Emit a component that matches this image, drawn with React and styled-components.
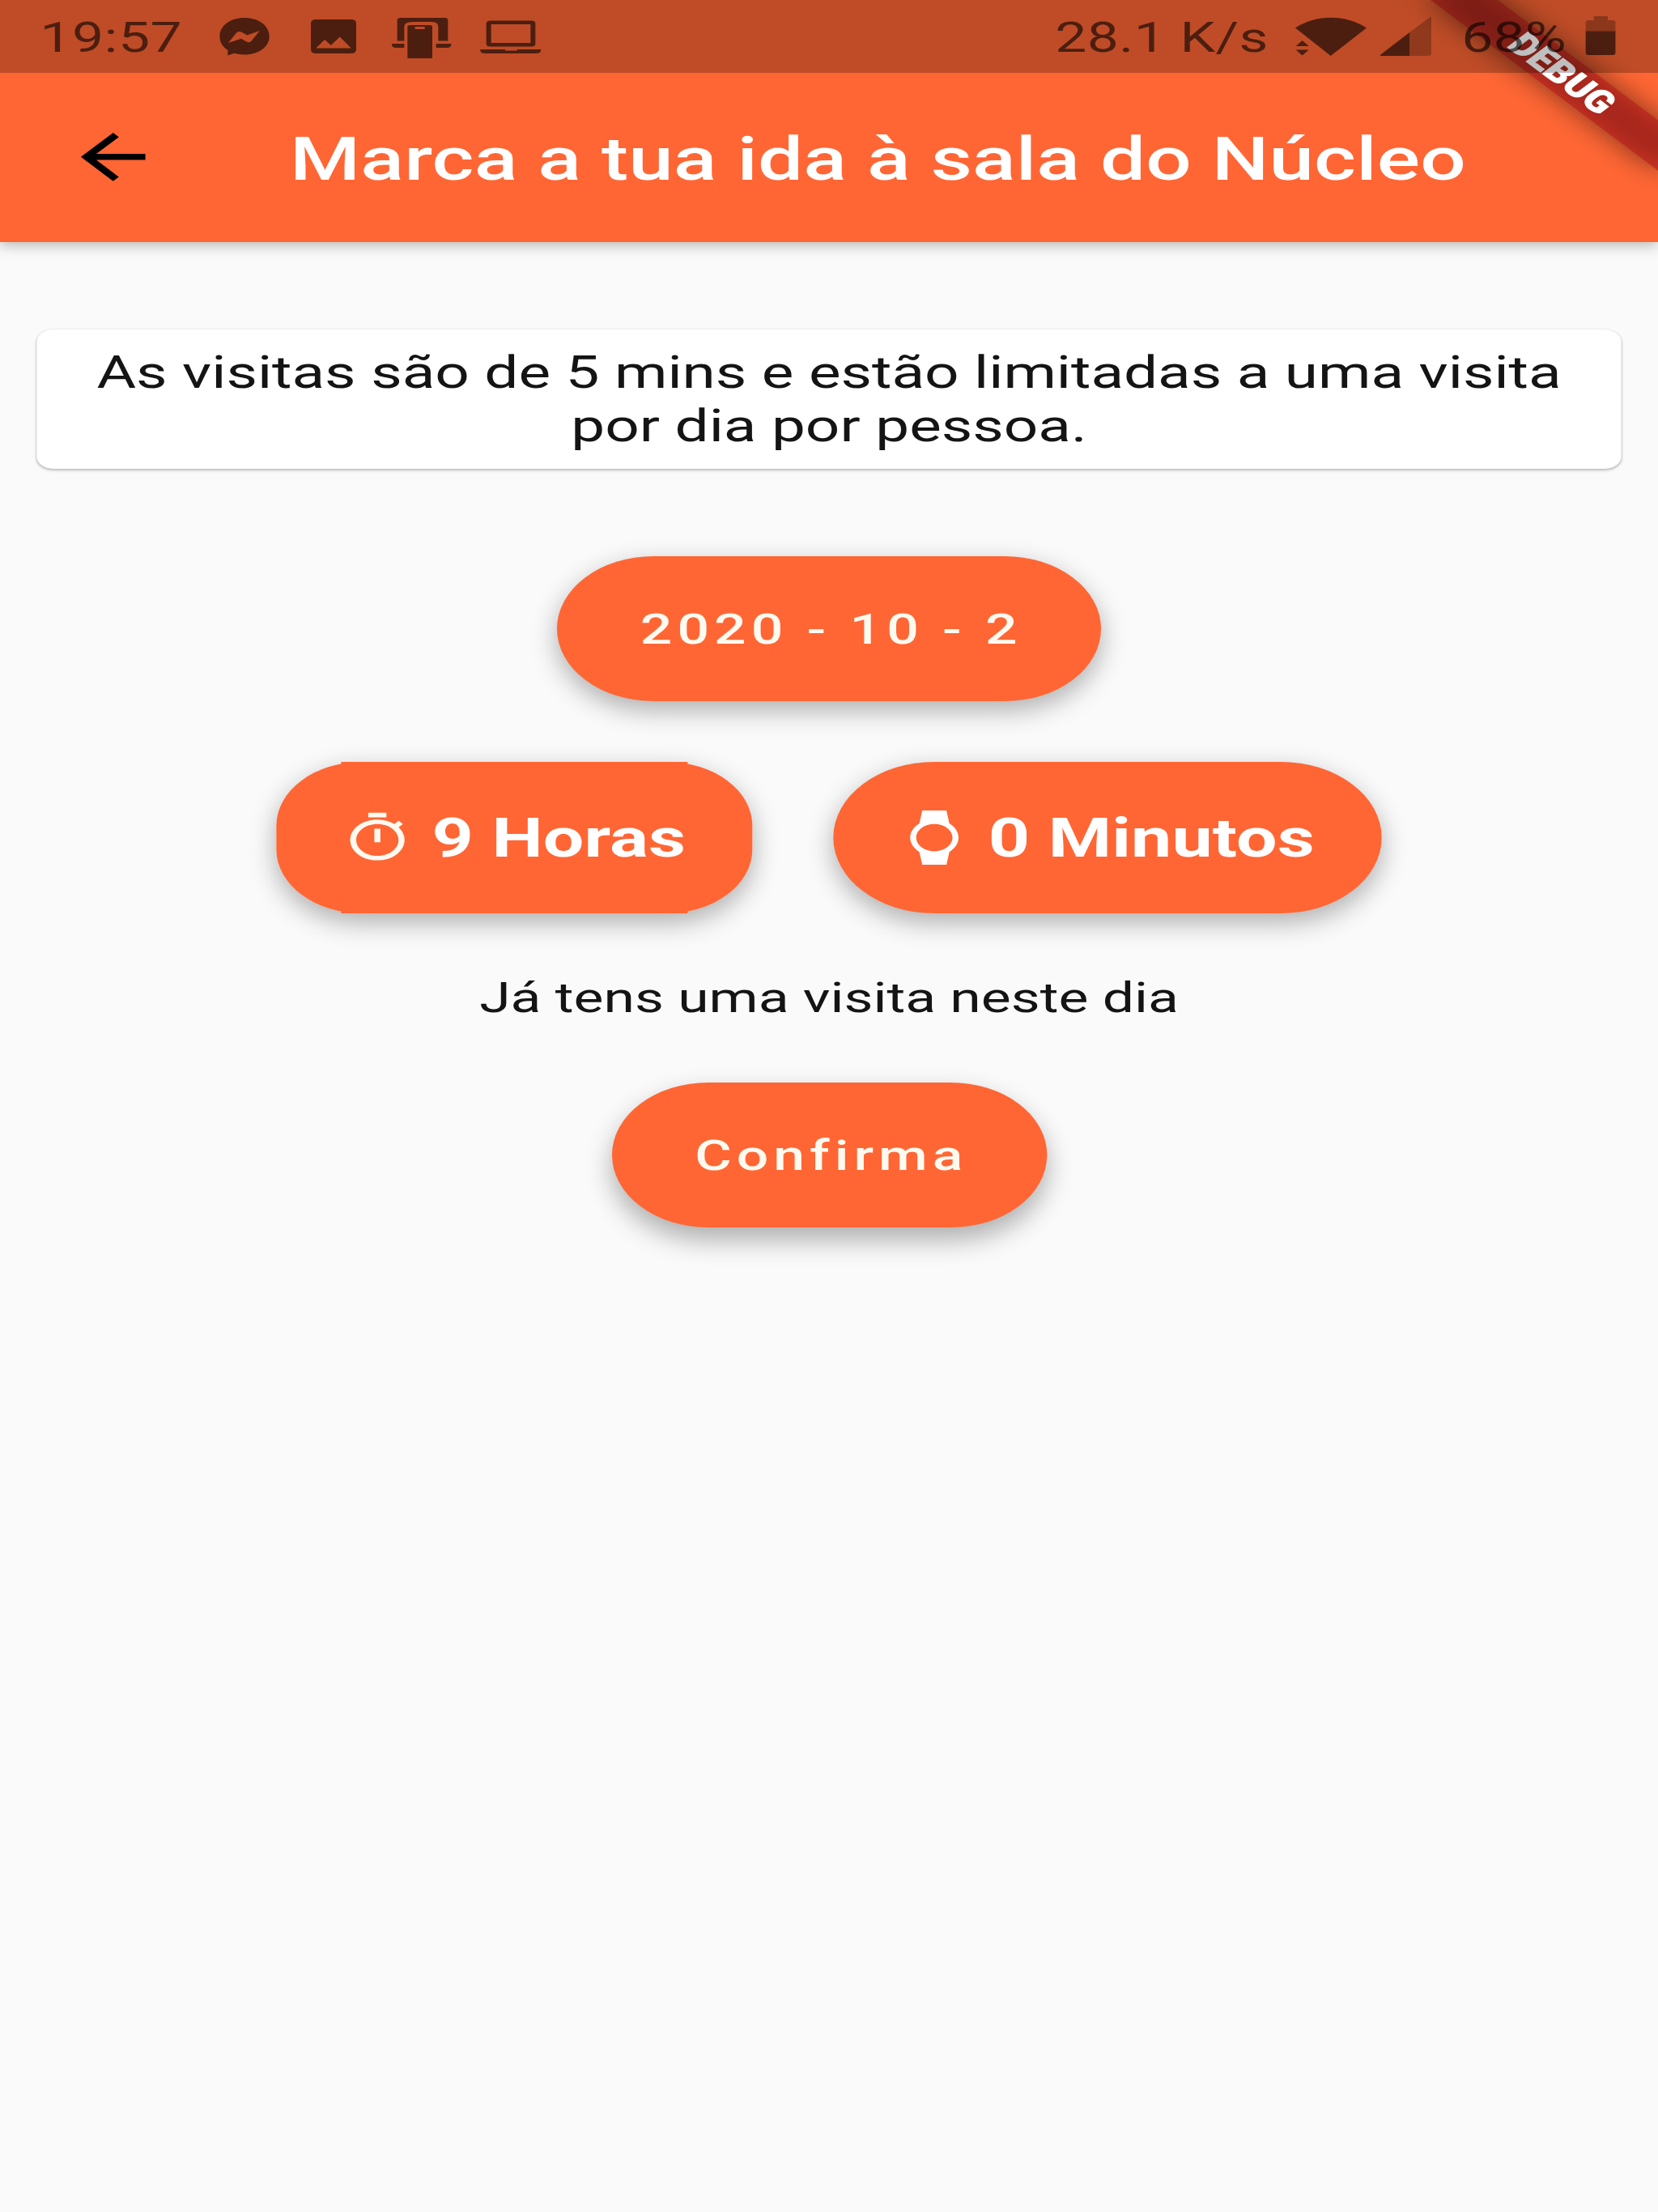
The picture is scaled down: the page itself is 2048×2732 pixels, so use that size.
import React from "react";
import styled, { createGlobalStyle } from "styled-components";

const ORANGE = "#ff6634";
const INK = "rgba(0, 0, 0, 0.6)";

const GlobalStyle = createGlobalStyle`
  html, body {
    margin: 0;
    padding: 0;
    background: #fafafa;
    overflow: hidden;
  }
  * { box-sizing: border-box; }
`;

/* The phone canvas is 9:16 and is shown stretched to a 3:4 display. */
const Screen = styled.div`
  position: relative;
  width: 1536px;
  height: 2732px;
  overflow: hidden;
  display: flex;
  flex-direction: column;
  background: #fafafa;
  color: rgba(0, 0, 0, 0.92);
  font-family: Roboto, "Liberation Sans", sans-serif;
  transform: scaleX(1.33333);
  transform-origin: 0 0;
`;

const AppBar = styled.header`
  flex: none;
  height: 298.6px;
  padding: 89.6px 60px 0;
  display: flex;
  align-items: center;
  background: ${ORANGE};
  box-shadow: 0 4px 14px rgba(0, 0, 0, 0.27);
`;

const BackIcon = styled.svg`
  flex: none;
  width: 89.6px;
  height: 89.6px;
  margin-right: 119px;
`;

const Title = styled.h1`
  margin: 0;
  padding-top: 6px;
  color: #fff;
  font-size: 74.67px;
  font-weight: 500;
  letter-spacing: 0.11px;
  line-height: 88px;
  white-space: nowrap;
`;

const Body = styled.main`
  display: flex;
  flex-direction: column;
  align-items: center;
  padding: 108px 33.6px 0;
`;

const Card = styled.section`
  width: 100%;
  height: 172.8px;
  padding: 20.4px 40px 0;
  border-radius: 15px;
  background: #fff;
  box-shadow: 0 2px 3px rgba(0, 0, 0, 0.24), 0 0 2px rgba(0, 0, 0, 0.1);
  font-size: 56px;
  line-height: 66px;
  letter-spacing: -0.01px;
  text-align: center;
`;

const Button = styled.button`
  position: relative;
  flex: none;
  display: flex;
  align-items: center;
  justify-content: center;
  width: ${(p) => p.$width}px;
  height: ${(p) => p.$height || 179.2}px;
  margin: ${(p) => p.$top || 0}px 0 0;
  padding: 2px 0 0 4.2px;
  border: 0;
  border-radius: ${(p) => p.$radius || 94}px;
  background: ${ORANGE};
  color: #fffaf0;
  font-family: inherit;
  font-size: 52.27px;
  font-weight: 500;
  letter-spacing: 4.5px;
  box-shadow: 0 ${(p) => p.$drop || 11}px 28px rgba(0, 0, 0, 0.31);
`;

const PickerRow = styled.div`
  display: flex;
  gap: 75px;
  margin-top: 75px;
`;

const PickerButton = styled(Button)`
  justify-content: flex-start;
  gap: 16.5px;
  padding: 0 0 0 60px;
  color: #fff;
  font-size: 67.2px;
  font-weight: 700;
  letter-spacing: 0.1px;
  white-space: nowrap;
`;

const SquaredPickerButton = styled(PickerButton)`
  background: transparent;
  &::before {
    content: "";
    position: absolute;
    inset: 0;
    border-radius: 79px;
    background: ${ORANGE};
  }
  &::after {
    content: "";
    position: absolute;
    inset: 0 59.5px;
    background: ${ORANGE};
  }
  & > * {
    position: relative;
    z-index: 1;
  }
`;

const PickerIcon = styled.svg`
  flex: none;
  width: 67.2px;
  height: 67.2px;
`;

const PickerLabel = styled.span`
  padding-top: 2px;
`;

const Message = styled.p`
  margin: 74.5px 0 0;
  height: 59.5px;
  font-size: 52.27px;
  line-height: 61px;
  letter-spacing: -0.01px;
`;

const BannerAnchor = styled.div`
  position: absolute;
  top: 0;
  right: 0;
  width: 0;
  height: 0;
  transform: rotate(45deg);
`;

const BannerShadow = styled.div`
  position: absolute;
  left: -149.3px;
  top: 104.5px;
  width: 298.7px;
  height: 44.8px;
  background: rgba(0, 0, 0, 0.5);
  filter: blur(14.8px);
`;

const Banner = styled.div`
  position: absolute;
  left: -149.3px;
  top: 104.5px;
  width: 298.7px;
  height: 44.8px;
  padding-left: 3px;
  background: rgba(183, 28, 28, 0.63);
  color: #fff;
  font-size: 38.1px;
  font-weight: 900;
  line-height: 45.6px;
  text-align: center;
  -webkit-text-stroke: 0.8px #fff;
`;

const StatusBar = styled.div`
  position: absolute;
  inset: 0 0 auto 0;
  height: 89.6px;
  display: flex;
  align-items: center;
  padding: 0 39.4px 0 37px;
  background: rgba(0, 0, 0, 0.25);
  color: ${INK};
  font-size: 52.27px;
  line-height: 92px;
  white-space: nowrap;
`;

const StatusText = styled.span`
  flex: none;
  width: ${(p) => p.$width}px;
  margin-left: ${(p) => p.$left || 0}px;
  padding-top: 5px;
  letter-spacing: ${(p) => p.$spacing || 0}px;
`;

const StatusIcon = styled.svg`
  flex: none;
  width: ${(p) => p.$width}px;
  height: 52px;
  margin-left: ${(p) => p.$left}px;
  fill: ${INK};
  overflow: visible;
`;

const Spacer = styled.div`
  flex: 1;
`;

export default function App() {
  return (
    <>
      <GlobalStyle />
      <Screen>
        <AppBar>
          <BackIcon viewBox="0 0 24 24">
            <path d="M20 11H7.83l5.59-5.59L12 4l-8 8 8 8 1.41-1.41L7.83 13H20v-2z" />
          </BackIcon>
          <Title>Marca a tua ida à sala do Núcleo</Title>
        </AppBar>

        <Body>
          <Card>
            As visitas são de 5 mins e estão limitadas a uma visita por dia por pessoa.
          </Card>
          <Button $width={503.7} $top={107.5}>2020 - 10 - 2</Button>
          <PickerRow>
            <SquaredPickerButton $width={440.5} $height={186.8} $radius={79}>
              <PickerIcon viewBox="0 0 24 24" fill="#fffaf0">
                <path d="M15 1H9v2h6V1zm-4 13h2V8h-2v6zm8.03-6.61l1.42-1.42c-.43-.51-.9-.99-1.41-1.41l-1.42 1.42C16.07 4.74 14.12 4 12 4c-4.97 0-9 4.03-9 9s4.02 9 9 9 9-4.03 9-9c0-2.12-.74-4.07-1.97-5.61zM12 20c-3.87 0-7-3.13-7-7s3.13-7 7-7 7 3.13 7 7-3.13 7-7 7z" />
              </PickerIcon>
              <PickerLabel>9 Horas</PickerLabel>
            </SquaredPickerButton>
            <PickerButton $width={507.7} $height={186.8}>
              <PickerIcon viewBox="0 0 24 24" fill="#fff">
                <path d="M20 12c0-2.54-1.19-4.81-3.04-6.27L16 0H8l-.95 5.73C5.19 7.19 4 9.45 4 12s1.19 4.81 3.05 6.27L8 24h8l.96-5.73C18.81 16.81 20 14.54 20 12zM6 12c0-3.31 2.69-6 6-6s6 2.69 6 6-2.69 6-6 6-6-2.69-6-6z" />
              </PickerIcon>
              <PickerLabel>0 Minutos</PickerLabel>
            </PickerButton>
          </PickerRow>
          <Message>Já tens uma visita neste dia</Message>
          <Button $width={403} $top={75} $drop={15}>Confirma</Button>
        </Body>

        <BannerAnchor>
          <BannerShadow />
          <Banner>DEBUG</Banner>
        </BannerAnchor>

        <StatusBar>
          <StatusText $width={134} $spacing={0.35}>19:57</StatusText>
          <StatusIcon $left={32} $width={47} viewBox="0 0 47 52">
            <path
              fillRule="evenodd"
              d="M23.5 3C10.500 3 0.500 12.500 0.500 26C0.500 33 3 38.500 8 43V49.500L14 46.800C17 48 20 48.500 23.500 48.500C36.500 48.500 46.500 39 46.500 26C46.500 12.500 36.500 3 23.500 3ZM8.500 34L16 21.500C17.500 19.500 19.300 19.500 21 20.700L26 24.400L37.500 19L30 31.500C28.700 33.500 27 33.600 25.300 32.400L20.500 28.800Z"
            />
          </StatusIcon>
          <StatusIcon $left={38} $width={42} viewBox="0 0 42 52">
            <path
              fillRule="evenodd"
              d="M4.700 5H37.300Q42 5 42 9.700V42.300Q42 47 37.300 47H4.700Q0 47 0 42.300V9.700Q0 5 4.700 5ZM4.700 40.500H37.300L26.800 26.500L18.600 37L12.800 30Z"
            />
          </StatusIcon>
          <StatusIcon $left={33} $width={55} viewBox="0 0 55 52">
            <path d="M5 31.500V6Q5 3 8 3H49Q52 3 52 6V31.500H43V14Q43 8 37 8H20Q11.500 8 11.500 14V31.500ZM0 35H11.500V40H4Q0 40 0 36ZM41 35H55V36Q55 40 51 40H41Z" />
            <path fillRule="evenodd" d="M17 12H35Q37.500 12 37.500 14V53H14.500V14Q14.500 12 17 12ZM21.500 14V17H30.500V14Z" />
          </StatusIcon>
          <StatusIcon $left={27} $width={56} viewBox="0 0 56 52">
            <path
              fillRule="evenodd"
              d="M9.500 6.500H47.500Q51 6.500 51 10V35Q51 38.500 47.500 38.500H9.500Q5.500 38.500 5.500 35V10Q5.500 6.500 9.500 6.500ZM10 11V34H46.500V11ZM0 42H23V43.500H34V42H56V43.500Q56 47 51 47H5Q0 47 0 43.500Z"
            />
          </StatusIcon>
          <Spacer />
          <StatusText $width={198} $spacing={0.15}>28.1 K/s</StatusText>
          <StatusIcon $left={24.5} $width={66} viewBox="0 0 66 52">
            <path d="M0 15.500C19 -1.500 47 -1.500 66 15.500L32.800 50ZM6.500 31L12.500 38H0.500ZM0.500 42.500H12.500L6.500 49.500Z" />
          </StatusIcon>
          <StatusIcon $left={11.5} $width={48} viewBox="0 0 48 52">
            <path d="M48 1V47Q48 50 45 50H27.800V21Z" opacity="0.4" />
            <path d="M27.800 21V50H2Q0 50 1 48.500Z" />
          </StatusIcon>
          <StatusText $left={28.5} $width={97}>68%</StatusText>
          <StatusIcon $left={18} $width={27.6} viewBox="0 0 27.6 52">
            <path d="M0 19.500V8.500Q0 6 2.500 6H7.500V1H20.500V6H25Q27.600 6 27.600 8.500V19.500Z" opacity="0.45" />
            <path d="M0 19.500H27.600V46Q27.600 49 25 49H2.500Q0 49 0 46Z" />
          </StatusIcon>
        </StatusBar>
      </Screen>
    </>
  );
}
